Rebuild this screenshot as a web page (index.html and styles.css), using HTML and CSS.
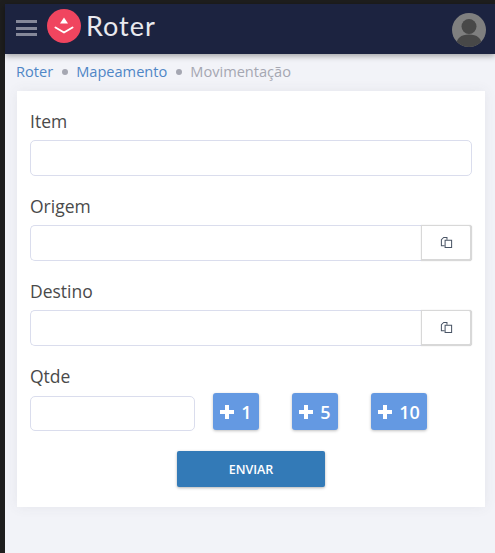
FILE: index.html
```html
<!DOCTYPE html>
<html lang="pt-BR">

<head>
  <meta charset="UTF-8">
  <meta name="viewport" content="width=device-width, initial-scale=1.0">
  <title>Roter — Movimentação</title>
  <link rel="stylesheet" href="styles.css">
</head>

<body>
  <div class="frame">
    <header class="topbar">
      <button class="burger" type="button" aria-label="Menu">
        <span></span><span></span><span></span>
      </button>
      <svg class="logo" viewBox="0 0 34 34" aria-hidden="true">
        <circle cx="17" cy="17" r="17" fill="#f0455f" />
        <path d="M17 8.500l4 6h-8z" fill="#fff" />
        <path d="M8.500 18.500l8.500 5 8.500-5" fill="none" stroke="#fff" stroke-width="2" stroke-linecap="round" stroke-linejoin="round" />
      </svg>
      <span class="brand">Roter</span>
      <svg class="avatar" viewBox="0 0 34 34" aria-hidden="true">
        <defs>
          <clipPath id="avatar-clip">
            <circle cx="17" cy="17" r="17" />
          </clipPath>
        </defs>
        <circle cx="17" cy="17" r="17" fill="#7f7f7f" />
        <g clip-path="url(#avatar-clip)" fill="#484848">
          <circle cx="17" cy="13.500" r="7.500" />
          <path d="M4 34c0-9 5-12.500 13-12.500S30 25 30 34z" />
        </g>
      </svg>
    </header>

    <nav class="crumbs">
      <a href="#">Roter</a>
      <i class="dot"></i>
      <a href="#">Mapeamento</a>
      <i class="dot"></i>
      <span>Movimentação</span>
    </nav>

    <form class="card">
      <div class="field">
        <label for="item">Item</label>
        <input id="item" class="input" type="text">
      </div>

      <div class="field">
        <label for="origem">Origem</label>
        <div class="group">
          <input id="origem" class="input input--joined" type="text">
          <button class="paste" type="button" aria-label="Colar">
            <svg viewBox="0 0 14 14" aria-hidden="true">
              <path d="M5 10.500H1.500V4L4 1.500h3.500V4" />
              <path d="M5.500 4.500h7v8h-7z" />
            </svg>
          </button>
        </div>
      </div>

      <div class="field">
        <label for="destino">Destino</label>
        <div class="group">
          <input id="destino" class="input input--joined" type="text">
          <button class="paste" type="button" aria-label="Colar">
            <svg viewBox="0 0 14 14" aria-hidden="true">
              <path d="M5 10.500H1.500V4L4 1.500h3.500V4" />
              <path d="M5.500 4.500h7v8h-7z" />
            </svg>
          </button>
        </div>
      </div>

      <div class="field field--qty">
        <label for="qtde">Qtde</label>
        <div class="qty-row">
          <input id="qtde" class="input input--qty" type="text">
          <button class="add" type="button"><span class="plus"></span>1</button>
          <button class="add" type="button"><span class="plus"></span>5</button>
          <button class="add add--wide" type="button"><span class="plus"></span>10</button>
        </div>
      </div>

      <div class="actions">
        <button class="send" type="submit">ENVIAR</button>
      </div>
    </form>
  </div>
</body>

</html>
```

FILE: styles.css
```css
* {
  box-sizing: border-box;
}

html,
body {
  height: 100%;
}

body {
  margin: 0;
  background: #1e1e1e;
  padding: 4px 0 0 5px;
  overflow: hidden;
  font-family: "Open Sans", "Noto Sans", sans-serif;
}

.frame {
  height: 100%;
  background: #f2f3f8;
}

.topbar {
  height: 50px;
  background: #1c2340;
  display: flex;
  align-items: center;
  padding: 0 9px 0 11px;
  box-shadow: 0 2px 6px rgba(0, 0, 0, 0.35);
  position: relative;
}

.burger {
  width: 21px;
  height: 16px;
  margin-top: -2px;
  padding: 0;
  border: none;
  background: none;
  display: flex;
  flex-direction: column;
  justify-content: space-between;
  margin-right: 10px;
}

.burger span {
  height: 3px;
  background: #858899;
}

.logo {
  width: 34px;
  height: 34px;
  margin-top: -7px;
}

.brand {
  margin-left: 5px;
  margin-top: -8px;
  font-family: Lato, sans-serif;
  font-size: 27px;
  letter-spacing: 1px;
  color: #e9e9ee;
  line-height: 1;
}

.avatar {
  width: 34px;
  height: 34px;
  margin-left: auto;
  margin-top: 2px;
}

.crumbs {
  height: 37px;
  padding: 7px 0 0 11px;
  display: flex;
  align-items: flex-start;
  font-size: 14.600px;
  line-height: 20px;
  color: #a5a7b2;
}

.crumbs a {
  color: #4f86c6;
  text-decoration: none;
}

.dot {
  width: 6px;
  height: 6px;
  border-radius: 50%;
  background: #a5a7b2;
  margin: 8px 8px 0 9px;
}

.card {
  width: 468px;
  height: 416px;
  margin-left: 12px;
  padding: 18px 13px 0;
  background: #fff;
  box-shadow: 0 0 12px rgba(81, 77, 92, 0.08);
}

.field {
  margin-bottom: 18px;
}

.field label {
  display: block;
  font-size: 17.500px;
  line-height: 24px;
  margin-bottom: 7px;
  color: #4a4a4a;
}

.input {
  display: block;
  width: 100%;
  height: 36px;
  border: 1px solid #dadded;
  border-radius: 5px;
  background: #fff;
}

.group {
  display: flex;
}

.input--joined {
  flex: 1;
  min-width: 0;
  border-right: none;
  border-radius: 5px 0 0 5px;
}

.paste {
  width: 51px;
  height: 36px;
  padding: 0;
  background: #fff;
  border: 1px solid #d8d8d8;
  border-bottom-width: 2px;
  border-right-width: 2px;
  border-radius: 0 3px 3px 0;
  box-shadow: 0 0 1px rgba(0, 0, 0, 0.25);
  display: flex;
  align-items: center;
  justify-content: center;
}

.paste svg {
  width: 13px;
  height: 13px;
  fill: none;
  stroke: #4a5566;
  stroke-width: 1.100;
}

.field--qty {
  margin-bottom: 20px;
}

.field--qty label {
  margin-bottom: 5px;
}

.qty-row {
  display: flex;
  align-items: flex-start;
}

.input--qty {
  width: 165px;
  height: 35px;
  margin-top: 3px;
  margin-right: 18px;
}

.add {
  width: 46px;
  height: 37px;
  margin-right: 33px;
  padding: 0;
  border: none;
  border-radius: 3px;
  background: #6499e2;
  color: #fff;
  font-family: inherit;
  font-size: 18px;
  font-weight: 600;
  box-shadow: 0 1px 3px rgba(0, 0, 0, 0.25);
  display: flex;
  align-items: center;
  justify-content: center;
  gap: 7px;
}

.add--wide {
  width: 56px;
  margin-right: 0;
}

.plus {
  width: 14px;
  height: 14px;
  background:
    linear-gradient(#fff, #fff) center / 14px 4px no-repeat,
    linear-gradient(#fff, #fff) center / 4px 14px no-repeat;
  border-radius: 1px;
}

.actions {
  display: flex;
  justify-content: center;
}

.send {
  width: 148px;
  height: 36px;
  border: none;
  border-radius: 2px;
  background: #337ab7;
  color: #fff;
  font-family: inherit;
  font-size: 12.500px;
  font-weight: 600;
  box-shadow: 0 1px 3px rgba(0, 0, 0, 0.3);
}
```
